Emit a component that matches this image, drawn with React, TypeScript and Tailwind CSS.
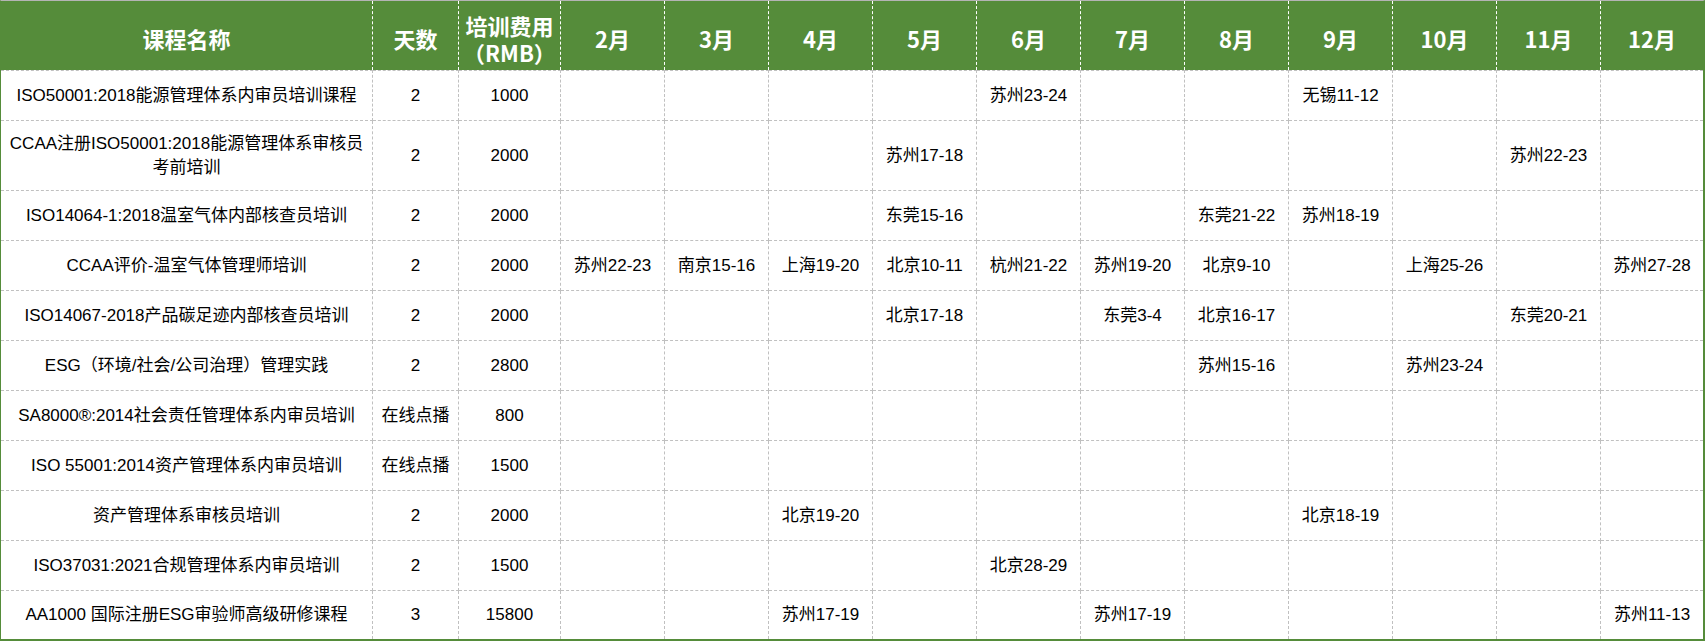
import React from "react";

interface Course {
  name: React.ReactNode;
  days: string;
  fee: string;
  sessions: Record<number, string>;
}

const months = [2, 3, 4, 5, 6, 7, 8, 9, 10, 11, 12];

const courses: Course[] = [
  { name: "ISO50001:2018能源管理体系内审员培训课程", days: "2", fee: "1000", sessions: { 6: "苏州23-24", 9: "无锡11-12" } },
  {
    name: (
      <>
        CCAA注册ISO50001:2018能源管理体系审核员
        <br />
        考前培训
      </>
    ),
    days: "2",
    fee: "2000",
    sessions: { 5: "苏州17-18", 11: "苏州22-23" },
  },
  { name: "ISO14064-1:2018温室气体内部核查员培训", days: "2", fee: "2000", sessions: { 5: "东莞15-16", 8: "东莞21-22", 9: "苏州18-19" } },
  {
    name: "CCAA评价-温室气体管理师培训",
    days: "2",
    fee: "2000",
    sessions: { 2: "苏州22-23", 3: "南京15-16", 4: "上海19-20", 5: "北京10-11", 6: "杭州21-22", 7: "苏州19-20", 8: "北京9-10", 10: "上海25-26", 12: "苏州27-28" },
  },
  { name: "ISO14067-2018产品碳足迹内部核查员培训", days: "2", fee: "2000", sessions: { 5: "北京17-18", 7: "东莞3-4", 8: "北京16-17", 11: "东莞20-21" } },
  { name: "ESG（环境/社会/公司治理）管理实践", days: "2", fee: "2800", sessions: { 8: "苏州15-16", 10: "苏州23-24" } },
  { name: "SA8000®:2014社会责任管理体系内审员培训", days: "在线点播", fee: "800", sessions: {} },
  { name: "ISO 55001:2014资产管理体系内审员培训", days: "在线点播", fee: "1500", sessions: {} },
  { name: "资产管理体系审核员培训", days: "2", fee: "2000", sessions: { 4: "北京19-20", 9: "北京18-19" } },
  { name: "ISO37031:2021合规管理体系内审员培训", days: "2", fee: "1500", sessions: { 6: "北京28-29" } },
  { name: "AA1000 国际注册ESG审验师高级研修课程", days: "3", fee: "15800", sessions: { 4: "苏州17-19", 7: "苏州17-19", 12: "苏州11-13" } },
];

export default function App() {
  const head =
    "flex items-center justify-center text-center bg-[#558c3a] text-white font-bold text-[22px] font-['Noto_Sans_CJK_SC',sans-serif]";
  const headLine = "border-r border-dashed border-white";

  return (
    <div className="w-[1705px] h-[641px] bg-white border-t border-t-[#b4b4b4] border-l border-r-2 border-b-2 border-l-[#558c3a] border-r-[#558c3a] border-b-[#558c3a] font-['Liberation_Sans','Noto_Sans_CJK_SC',sans-serif] text-[17px] text-black">
      <div className="grid grid-cols-[372px_86px_102px_repeat(10,104px)_102px] grid-rows-[69px_51px_70px_repeat(8,50px)_48px]">
        {/* header */}
        <div className={`${head} ${headLine} pt-1 leading-7`}>课程名称</div>
        <div className={`${head} ${headLine} pt-1 leading-7`}>天数</div>
        <div className={`${head} ${headLine} flex-col pt-[6px] leading-[27px]`}>
          <span>培训费用</span>
          <span>（RMB）</span>
        </div>
        {months.map((m, i) => (
          <div key={m} className={`${head} pt-1 leading-7 ${i < months.length - 1 ? headLine : ""}`}>
            {m}月
          </div>
        ))}

        {/* body */}
        {courses.map((c, r) => {
          const last = r === courses.length - 1;
          const cell = `flex items-center justify-center text-center border-dashed border-[#c0c0c0] ${r === 0 ? "border-t" : ""} ${last ? "" : "border-b"}`;
          return (
            <React.Fragment key={r}>
              <div className={`${cell} border-r px-2 leading-6`}>{c.name}</div>
              <div className={`${cell} border-r`}>{c.days}</div>
              <div className={`${cell} border-r`}>{c.fee}</div>
              {months.map((m, i) => (
                <div key={m} className={`${cell} whitespace-nowrap ${i < months.length - 1 ? "border-r" : ""}`}>
                  {c.sessions[m] ?? ""}
                </div>
              ))}
            </React.Fragment>
          );
        })}
      </div>
    </div>
  );
}
